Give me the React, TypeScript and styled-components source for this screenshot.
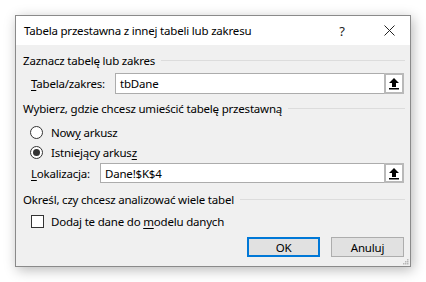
import React from "react";
import styled, { createGlobalStyle } from "styled-components";

const GlobalStyle = createGlobalStyle`
  html, body {
    margin: 0;
    padding: 0;
    background: #ffffff;
  }
  body {
    font-family: "Noto Sans", "Open Sans", sans-serif;
    font-size: 11.5px;
    letter-spacing: -0.2px;
    color: #000;
  }
`;

const Page = styled("div")`
  width: 426px;
  height: 282px;
  padding: 15px 0 0 15px;
  box-sizing: border-box;
  background: #fff;
`;

const Dialog = styled("div")`
  width: 396px;
  height: 252px;
  box-sizing: border-box;
  border: 1px solid #8a8a8a;
  background: #f0f0f0;
  box-shadow: 2px 3px 12px rgba(0, 0, 0, 0.28);
  display: flex;
  flex-direction: column;
  position: relative;
`;

const TitleBar = styled("div")`
  height: 29px;
  background: #fff;
  display: flex;
  align-items: center;
  padding: 0 15px 0 8px;
`;

const Title = styled("div")`
  flex: 1;
  white-space: nowrap;
`;

const TitleButton = styled("div")<{ $gap?: number }>`
  width: 12px;
  display: flex;
  align-items: center;
  justify-content: center;
  font-size: 13px;
  color: #222;
  margin-left: ${({ $gap }) => $gap ?? 0}px;
`;

const Body = styled("div")`
  flex: 1;
  display: flex;
  flex-direction: column;
  padding: 7px 5px 8px 7px;
`;

const Row = styled("div")<{ $top: number; $indent?: number; $h?: number }>`
  display: flex;
  align-items: center;
  margin-top: ${({ $top }) => $top}px;
  padding-left: ${({ $indent }) => $indent ?? 0}px;
  height: ${({ $h }) => $h ?? 16}px;
  white-space: nowrap;
`;

const Text = styled("span")`
  white-space: pre;
`;

const GroupLine = styled("div")`
  flex: 1;
  height: 1px;
  background: #dcdcdc;
  margin-left: 6px;
`;

const Label = styled("label")<{ $w: number }>`
  width: ${({ $w }) => $w}px;
  flex-shrink: 0;
`;

const U = styled("span")`
  text-decoration: underline;
  text-underline-offset: 2px;
`;

const InputBox = styled("div")`
  flex: 1;
  height: 100%;
  box-sizing: border-box;
  border: 1px solid #acacac;
  background: #fff;
  display: flex;
  align-items: center;
  margin-right: 1px;
`;

const InputText = styled("div")`
  flex: 1;
  padding-left: 4px;
`;

const PickButton = styled("div")`
  width: 20px;
  height: calc(100% + 2px);
  margin: -1px -1px -1px 0;
  box-sizing: border-box;
  border: 2px solid #b9b9b9;
  background: #fff;
  display: flex;
  align-items: center;
  justify-content: center;
`;

const Radio = styled("span")<{ $checked?: boolean }>`
  width: 13px;
  height: 13px;
  box-sizing: border-box;
  border: 1px solid #333;
  border-radius: 50%;
  background: #fff;
  display: flex;
  align-items: center;
  justify-content: center;
  margin-right: 8px;

  &::after {
    content: "";
    width: 7px;
    height: 7px;
    border-radius: 50%;
    background: ${({ $checked }) => ($checked ? "#333" : "transparent")};
  }
`;

const Checkbox = styled("span")`
  width: 13px;
  height: 13px;
  box-sizing: border-box;
  border: 1px solid #333;
  background: #fff;
  margin-right: 7px;
`;

const ButtonRow = styled("div")`
  display: flex;
  justify-content: flex-end;
  gap: 11px;
  margin-top: 8px;
  padding-right: 1px;
`;

const Button = styled("button")<{ $default?: boolean }>`
  width: 73px;
  height: 20px;
  box-sizing: border-box;
  border: ${({ $default }) => ($default ? "2px solid #0078d7" : "1px solid #adadad")};
  background: #e1e1e1;
  font-family: inherit;
  font-size: 11.5px;
  letter-spacing: -0.2px;
  color: #000;
  padding: 0;
  display: flex;
  align-items: center;
  justify-content: center;
`;

const Grip = styled("svg")`
  position: absolute;
  right: 1px;
  bottom: 1px;
`;

const UpArrow = () => (
  <svg width="12" height="13" viewBox="0 0 12 13">
    <polygon points="6,1 11,6 8,6 8,10 4,10 4,6 1,6" fill="#000" />
    <rect x="1" y="11" width="10" height="1.5" fill="#000" />
  </svg>
);

export default function App() {
  return (
    <>
      <GlobalStyle />
      <Page>
        <Dialog>
          <TitleBar>
            <Title>Tabela przestawna z innej tabeli lub zakresu</Title>
            <TitleButton>?</TitleButton>
            <TitleButton $gap={35}>
              <svg width="11" height="11" viewBox="0 0 11 11">
                <path d="M0.5 0.5 L10.5 10.5 M10.5 0.5 L0.5 10.5" stroke="#222" strokeWidth="1" />
              </svg>
            </TitleButton>
          </TitleBar>
          <Body>
            <Row $top={0}>
              <Text>Zaznacz tabelę lub zakres</Text>
              <GroupLine />
            </Row>
            <Row $top={5} $indent={8} $h={21}>
              <Label $w={84}>
                <U>T</U>abela/zakres:
              </Label>
              <InputBox>
                <InputText>tbDane</InputText>
                <PickButton>
                  <UpArrow />
                </PickButton>
              </InputBox>
            </Row>
            <Row $top={6}>
              <Text>Wybierz, gdzie chcesz umieścić tabelę przestawną</Text>
              <GroupLine />
            </Row>
            <Row $top={8} $indent={7}>
              <Radio />
              <Text>
                Now<U>y</U> arkusz
              </Text>
            </Row>
            <Row $top={4} $indent={7}>
              <Radio $checked />
              <Text>
                Istniejący arkus<U>z</U>
              </Text>
            </Row>
            <Row $top={3} $indent={8} $h={20}>
              <Label $w={69}>
                <U>L</U>okalizacja:
              </Label>
              <InputBox>
                <InputText>Dane!$K$4</InputText>
                <PickButton>
                  <UpArrow />
                </PickButton>
              </InputBox>
            </Row>
            <Row $top={8}>
              <Text>Określ, czy chcesz analizować wiele tabel</Text>
              <GroupLine />
            </Row>
            <Row $top={6} $indent={8}>
              <Checkbox />
              <Text>
                Dodaj te dane do <U>m</U>odelu danych
              </Text>
            </Row>
            <ButtonRow>
              <Button $default>OK</Button>
              <Button>Anuluj</Button>
            </ButtonRow>
          </Body>
          <Grip width="7" height="7" viewBox="0 0 7 7">
            <rect x="5" y="1" width="1.5" height="1.5" fill="#b8b8b8" />
            <rect x="3" y="3" width="1.5" height="1.5" fill="#b8b8b8" />
            <rect x="5" y="3" width="1.5" height="1.5" fill="#b8b8b8" />
            <rect x="1" y="5" width="1.5" height="1.5" fill="#b8b8b8" />
            <rect x="3" y="5" width="1.5" height="1.5" fill="#b8b8b8" />
            <rect x="5" y="5" width="1.5" height="1.5" fill="#b8b8b8" />
          </Grip>
        </Dialog>
      </Page>
    </>
  );
}
